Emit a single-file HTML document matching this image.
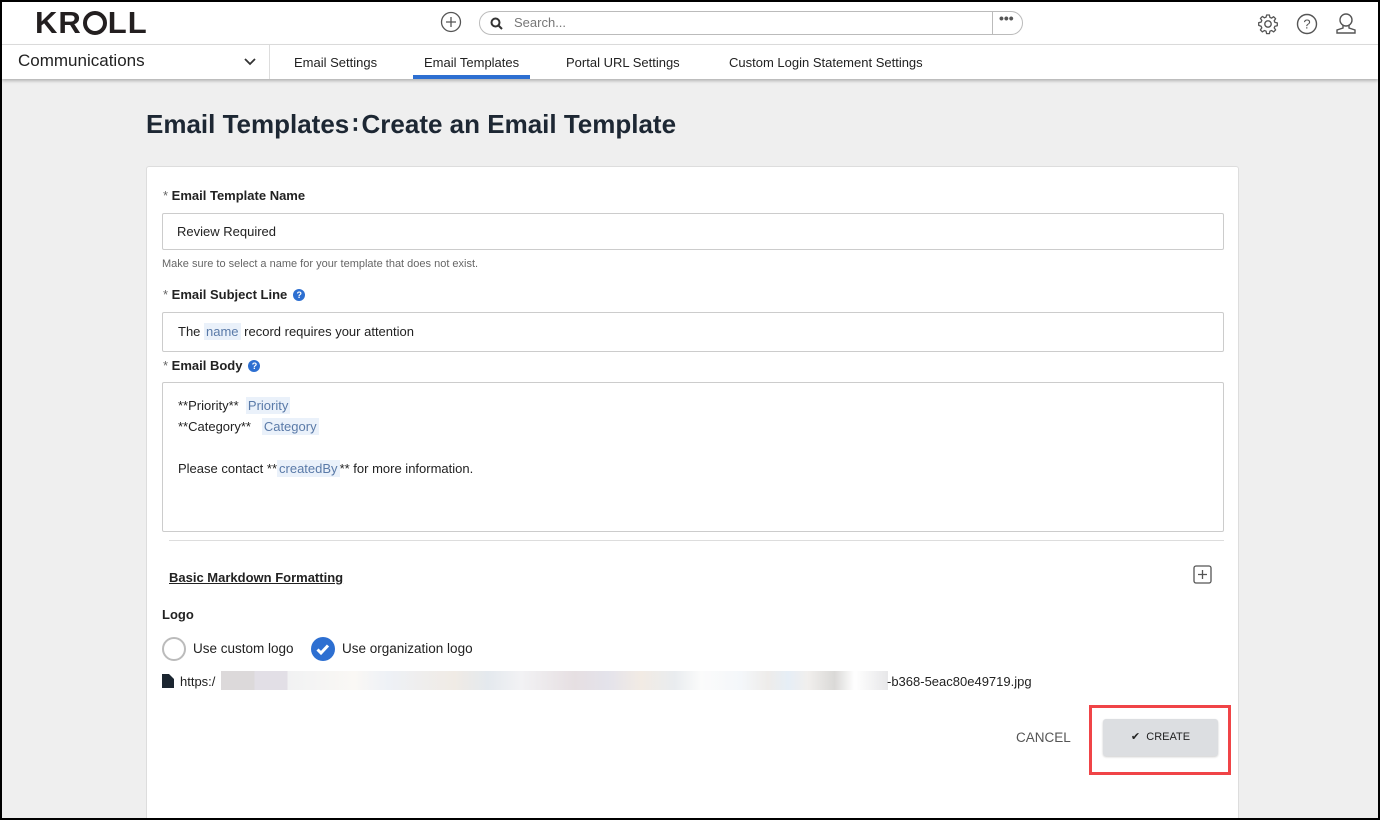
<!DOCTYPE html>
<html><head><style>
*{box-sizing:border-box;margin:0;padding:0}
body{width:1380px;height:820px;overflow:hidden;font-family:"Liberation Sans",sans-serif;background:#000;position:relative;color:#222}
.frame{position:absolute;left:2px;top:2px;width:1376px;height:816px;background:#efefef;overflow:hidden}
.top{position:absolute;left:0;top:0;width:1376px;height:43px;background:#fff;border-bottom:1px solid #ddd}
.nav{position:absolute;left:0;top:43px;width:1376px;height:34px;background:#fff;box-shadow:0 2px 3px rgba(0,0,0,.25)}
.abs{position:absolute}
.tab{position:absolute;top:10px;font-size:13px;color:#222}
.card{position:absolute;left:144px;top:164px;width:1093px;height:660px;background:#fff;border:1px solid #ddd;border-radius:3px}
.lbl{position:absolute;font-size:13px;font-weight:bold;color:#222}
.inp{position:absolute;left:15px;width:1062px;border:1px solid #ccc;border-radius:2px;font-size:13px;color:#222}
.tag{background:#eaf1fa;color:#5a7aa8;padding:1px 2px}
.q{display:inline-block;width:12px;height:12px;border-radius:50%;background:#2d6fd1;color:#fff;font-size:9px;text-align:center;line-height:12px;margin-left:6px;vertical-align:1px}
</style></head><body>
<div class="frame">
<div class="top">
 <div class="abs" style="left:33px;top:3px;font-size:31px;font-weight:bold;color:#231f20;letter-spacing:1px">KR<span style="display:inline-block;width:24px;height:24px;border:4px solid #231f20;border-radius:50%;vertical-align:-2px;margin:0 1px"></span>LL</div>
 <svg class="abs" style="left:438px;top:9px" width="22" height="22"><circle cx="11" cy="11" r="9.5" fill="none" stroke="#555" stroke-width="1.3"/><path d="M11 6v10M6 11h10" stroke="#555" stroke-width="1.3"/></svg>
 <div class="abs" style="left:477px;top:9px;width:544px;height:24px;border:1px solid #bbb;border-radius:12px">
  <svg class="abs" style="left:10px;top:5px" width="13" height="13"><circle cx="5.5" cy="5.5" r="4" fill="none" stroke="#333" stroke-width="2"/><path d="M8.5 8.5l3.5 3.5" stroke="#333" stroke-width="2"/></svg>
  <div class="abs" style="left:34px;top:3px;font-size:13px;color:#777">Search...</div>
  <div class="abs" style="left:512px;top:0;width:1px;height:22px;background:#bbb"></div>
  <div class="abs" style="left:519px;top:-2px;font-size:14px;font-weight:bold;color:#555">•••</div>
 </div>
 <svg class="abs" style="left:1255px;top:11px" width="22" height="22" viewBox="0 0 22 22"><circle cx="11" cy="11" r="3.2" fill="none" stroke="#555" stroke-width="1.4"/><path d="M9.6 2h2.8l.5 2.4 1.7.7 2-1.4 2 2-1.4 2 .7 1.7 2.4.5v2.8l-2.4.5-.7 1.7 1.4 2-2 2-2-1.4-1.7.7-.5 2.4H9.6l-.5-2.4-1.7-.7-2 1.4-2-2 1.4-2-.7-1.7L1.7 12.4V9.6l2.4-.5.7-1.7-1.4-2 2-2 2 1.4 1.7-.7z" fill="none" stroke="#555" stroke-width="1.3" stroke-linejoin="round"/></svg>
 <svg class="abs" style="left:1294px;top:11px" width="22" height="22"><circle cx="11" cy="11" r="9.5" fill="none" stroke="#555" stroke-width="1.4"/><text x="11" y="15.5" font-size="13" text-anchor="middle" fill="#555" font-family="Liberation Sans">?</text></svg>
 <svg class="abs" style="left:1333px;top:10px" width="22" height="24"><circle cx="11" cy="8" r="6" fill="none" stroke="#555" stroke-width="1.4"/><path d="M8 13.5v2.5L2 18v3h18v-3l-6-2v-2.5" fill="none" stroke="#555" stroke-width="1.4"/></svg>
</div>
<div class="nav">
 <div class="abs" style="left:16px;top:6px;font-size:17px;color:#222">Communications</div>
 <svg class="abs" style="left:242px;top:13px" width="12" height="8"><path d="M1 1l5 5 5-5" fill="none" stroke="#333" stroke-width="1.8"/></svg>
 <div class="abs" style="left:267px;top:0;width:1px;height:34px;background:#ddd"></div>
 <div class="tab" style="left:292px">Email Settings</div>
 <div class="tab" style="left:422px">Email Templates</div>
 <div class="abs" style="left:411px;top:30px;width:117px;height:4px;background:#2d6fd1"></div>
 <div class="tab" style="left:564px">Portal URL Settings</div>
 <div class="tab" style="left:727px">Custom Login Statement Settings</div>
</div>
<div class="abs" style="left:144px;top:107px;font-size:26px;font-weight:bold;color:#1d2733">Email Templates<span style="font-size:24px;margin:0 3px">∶</span>Create an Email Template</div>
<div class="card">
 <div class="lbl" style="left:16px;top:21px"><span style="color:#666;font-weight:normal">*</span> Email Template Name</div>
 <div class="inp" style="top:46px;height:37px;padding:10px 14px">Review Required</div>
 <div class="abs" style="left:15px;top:91px;font-size:11px;color:#666">Make sure to select a name for your template that does not exist.</div>
 <div class="lbl" style="left:16px;top:120px"><span style="color:#666;font-weight:normal">*</span> Email Subject Line<span class="q">?</span></div>
 <div class="inp" style="top:145px;height:40px;padding:11px 15px">The <span class="tag">name</span> record requires your attention</div>
 <div class="lbl" style="left:16px;top:191px"><span style="color:#666;font-weight:normal">*</span> Email Body<span class="q">?</span></div>
 <div class="inp" style="top:215px;height:150px;padding:12px 15px;line-height:21px">**Priority** &nbsp;<span class="tag">Priority</span><br>**Category** &nbsp;&nbsp;<span class="tag">Category</span><br><br>Please contact **<span class="tag">createdBy</span>** for more information.</div>
 <div class="abs" style="left:22px;top:373px;width:1055px;height:1px;background:#ddd"></div>
 <div class="abs" style="left:22px;top:403px;font-size:13px;font-weight:bold;text-decoration:underline;color:#222">Basic Markdown Formatting</div>
 <svg class="abs" style="left:1046px;top:398px" width="20" height="20"><rect x="1" y="1" width="17" height="17" rx="2" fill="none" stroke="#555" stroke-width="1.3"/><path d="M9.5 5v9M5 9.5h9" stroke="#555" stroke-width="1.3"/></svg>
 <div class="lbl" style="left:15px;top:440px">Logo</div>
 <div class="abs" style="left:15px;top:470px;width:24px;height:24px;border:2px solid #bbb;border-radius:50%"></div>
 <div class="abs" style="left:46px;top:474px;font-size:13.5px;color:#222">Use custom logo</div>
 <svg class="abs" style="left:164px;top:470px" width="24" height="24"><circle cx="12" cy="12" r="12" fill="#2d6fd1"/><path d="M6.5 12.5l3.5 3.5 7-7.5" fill="none" stroke="#fff" stroke-width="3"/></svg>
 <div class="abs" style="left:195px;top:474px;font-size:13.5px;color:#222">Use organization logo</div>
 <svg class="abs" style="left:15px;top:507px" width="12" height="14"><path d="M0 0h7l5 5v9H0z" fill="#1b2530"/></svg>
 <div class="abs" style="left:33px;top:507px;font-size:13px;color:#222">https:/</div>
 <div class="abs" style="left:74px;top:504px;width:667px;height:19px;background:linear-gradient(90deg,#dcd9da 0,#dcd9da 5%,#e2dfe6 5%,#e2dfe6 10%,#f1f2f3 10%,#faf8f5 20%,#eef1f6 25%,#f0ebe5 35%,#e4e9ee 40%,#f2f2f4 45%,#e6dfe2 53%,#e4e3eb 58%,#f2ebe4 63%,#e9ecef 68%,#fbfbfb 72%,#f4f7fa 78%,#eeecea 82%,#e6eef6 85%,#f1efed 88%,#dad9d7 92%,#fff 95%,#e7e7e9 100%)"></div>
 <div class="abs" style="left:740px;top:507px;font-size:13px;color:#222">-b368-5eac80e49719.jpg</div>
 <div class="abs" style="left:869px;top:563px;font-size:13.5px;color:#555">CANCEL</div>
 <div class="abs" style="left:956px;top:552px;width:115px;height:37px;background:#dcdee1;border-radius:3px;box-shadow:0 1px 2px rgba(0,0,0,.2);font-size:11px;color:#222;text-align:center;line-height:37px">✔&nbsp; CREATE</div>
 <div class="abs" style="left:942px;top:538px;width:142px;height:70px;border:3px solid #f04447"></div>
</div>
</div>
</body></html>
